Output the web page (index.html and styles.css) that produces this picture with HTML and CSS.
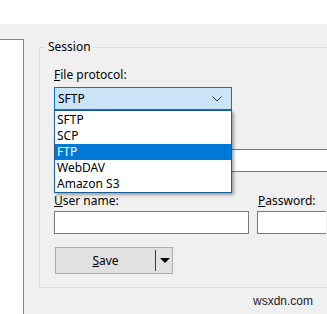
FILE: index.html
```html
<!DOCTYPE html>
<html>
<head>
<meta charset="utf-8">
<link rel="stylesheet" href="styles.css">
</head>
<body>
<div class="top"></div>
<div class="main">
  <div class="tree"></div>
  <div class="group">
    <div class="legend">Session</div>
    <div class="content">
      <div class="label"><u>F</u>ile protocol:</div>
      <div class="combo-wrap">
        <div class="combo">
          <span>SFTP</span>
          <svg class="chev" width="10" height="6" viewBox="0 0 10 6"><polyline points="0.5,0.5 5,5 9.5,0.5" fill="none" stroke="#3c3c3c" stroke-width="1"/></svg>
        </div>
        <ul class="list">
          <li>SFTP</li>
          <li>SCP</li>
          <li class="sel">FTP</li>
          <li>WebDAV</li>
          <li>Amazon S3</li>
        </ul>
      </div>
      <div class="label host-label"></div>
      <div class="input host"></div>
      <div class="creds">
        <div class="field">
          <div class="label"><u>U</u>ser name:</div>
          <div class="input user"></div>
        </div>
        <div class="field">
          <div class="label pass-label"><u>P</u>assword:</div>
          <div class="input pass"></div>
        </div>
      </div>
      <div class="btn">
        <span class="btn-text"><u>S</u>ave</span>
        <span class="sep"></span>
        <span class="tri"></span>
      </div>
    </div>
  </div>
</div>
<div class="mark">wsxdn.com</div>
</body>
</html>
```
FILE: styles.css
```css
html, body {
  margin: 0;
  padding: 0;
  width: 327px;
  height: 314px;
  overflow: hidden;
  background: #f0f0f0;
  font-family: "Noto Sans", "Open Sans", sans-serif;
  font-size: 12px;
  color: #000;
}
.top {
  height: 24px;
  background: #fff;
}
.main {
  display: flex;
  align-items: flex-start;
  height: 290px;
}
.tree {
  width: 23px;
  height: 275px;
  margin-top: 15px;
  background: #fff;
  border-top: 1px solid #828790;
  border-right: 1px solid #828790;
  flex: none;
}
.group {
  margin-left: 15px;
  margin-top: 23px;
  width: 288px;
  height: 239px;
  border: 1px solid #dcdcdc;
  border-right: none;
  flex: none;
}
.legend {
  display: inline-block;
  margin-left: 6px;
  margin-top: -9px;
  padding: 0 2px;
  background: #f0f0f0;
  line-height: 16px;
  vertical-align: top;
}
.content {
  padding: 2px 0 0 14px;
  position: relative;
}
.label {
  line-height: 15px;
  height: 15px;
}
.combo-wrap {
  position: relative;
  margin-top: 5px;
  width: 178px;
}
.combo {
  height: 21px;
  border: 1px solid #0078d7;
  background: #cce4f7;
  display: flex;
  align-items: center;
  justify-content: space-between;
  padding: 0 9px 0 3px;
  line-height: 21px;
}
.chev {
  display: block;
  margin-top: 1px;
}
.list {
  position: absolute;
  left: 0;
  top: 23px;
  width: 176px;
  margin: 0;
  padding: 1px 0 0;
  list-style: none;
  background: #fff;
  border: 1px solid #1a5f9c;
  box-shadow: 2px 2px 3px rgba(0, 0, 0, 0.35);
  z-index: 2;
}
.list li {
  height: 16px;
  line-height: 16px;
  padding-left: 2px;
}
.list li.sel {
  background: #0078d7;
  color: #fff;
}
.host-label {
  margin-top: 20px;
}
.input {
  height: 21px;
  background: #fff;
  border: 1px solid #7a7a7a;
}
.host {
  margin-top: 4px;
  width: 274px;
  border-right: none;
}
.creds {
  display: flex;
  gap: 8px;
  margin-top: 21px;
}
.field .label {
  margin-bottom: 3px;
}
.pass-label {
  padding-left: 1px;
}
.user {
  width: 193px;
}
.pass {
  width: 68px;
  border-right: none;
}
.btn {
  margin-top: 13px;
  margin-left: 1px;
  width: 116px;
  height: 25px;
  background: #e1e1e1;
  border: 1px solid #adadad;
  display: flex;
  align-items: center;
}
.btn-text {
  width: 99px;
  text-align: center;
}
.sep {
  width: 1px;
  height: 21px;
  background: #3c3c3c;
}
.tri {
  margin-left: 4px;
  width: 0;
  height: 0;
  border-left: 5px solid transparent;
  border-right: 5px solid transparent;
  border-top: 5px solid #000;
}
.mark {
  position: absolute;
  left: 253px;
  top: 294px;
  font-family: "Liberation Sans", Arial, sans-serif;
  font-size: 12px;
  line-height: 14px;
  color: #222;
}
```
